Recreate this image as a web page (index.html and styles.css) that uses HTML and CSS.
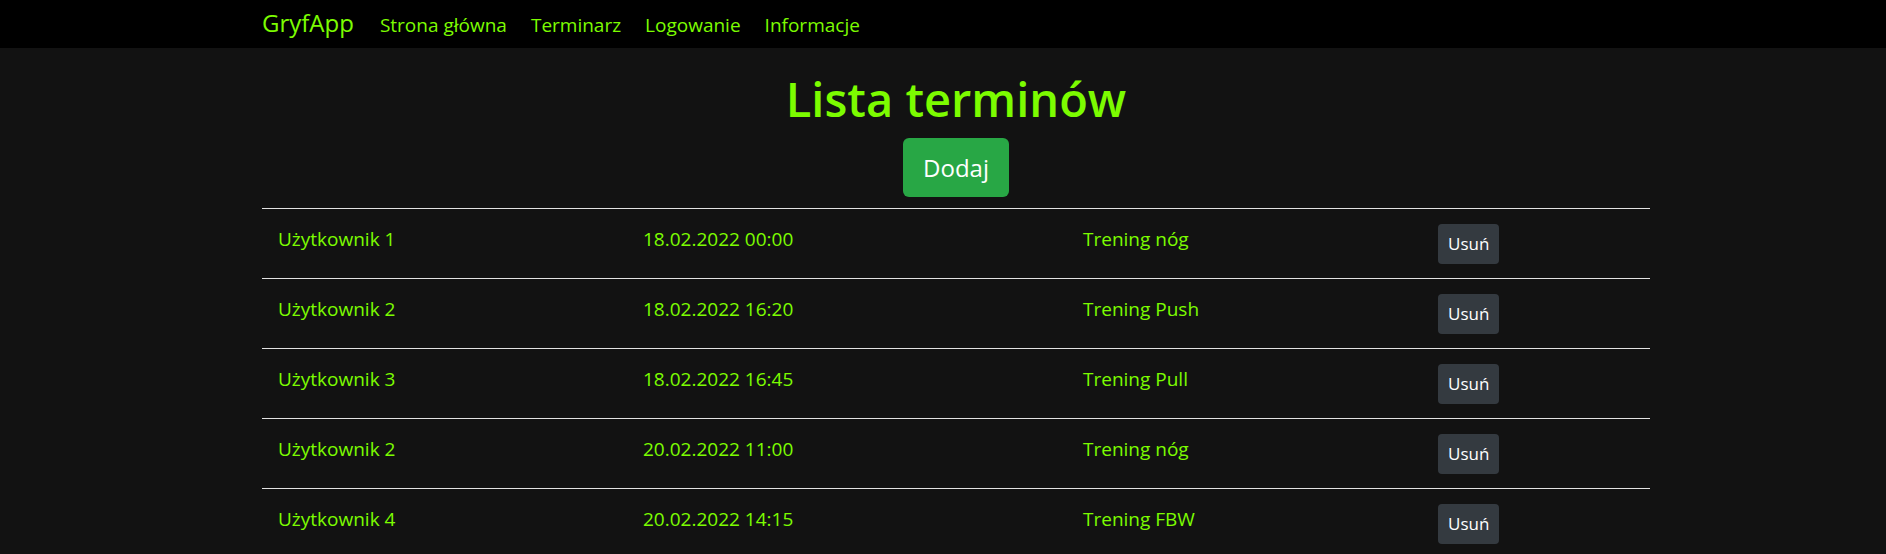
FILE: index.html
```html
<!DOCTYPE html>
<html lang="pl">
<head>
<meta charset="utf-8">
<title>GryfApp - Lista terminów</title>
<link rel="stylesheet" href="styles.css">
</head>
<body>
<nav class="navbar">
  <div class="nav-inner">
    <a class="brand" href="#">GryfApp</a>
    <ul class="nav-links">
      <li><a href="#">Strona główna</a></li>
      <li><a href="#">Terminarz</a></li>
      <li><a href="#">Logowanie</a></li>
      <li><a href="#">Informacje</a></li>
    </ul>
  </div>
</nav>
<main class="container">
  <h1 class="title">Lista terminów</h1>
  <div class="actions"><button class="btn btn-add">Dodaj</button></div>
  <div class="list">
    <div class="row"><span class="cell">Użytkownik 1</span><span class="cell">18.02.2022 00:00</span><span class="cell">Trening nóg</span><span class="cell cell-btn"><button class="btn btn-del">Usuń</button></span></div>
    <div class="row"><span class="cell">Użytkownik 2</span><span class="cell">18.02.2022 16:20</span><span class="cell">Trening Push</span><span class="cell cell-btn"><button class="btn btn-del">Usuń</button></span></div>
    <div class="row"><span class="cell">Użytkownik 3</span><span class="cell">18.02.2022 16:45</span><span class="cell">Trening Pull</span><span class="cell cell-btn"><button class="btn btn-del">Usuń</button></span></div>
    <div class="row"><span class="cell">Użytkownik 2</span><span class="cell">20.02.2022 11:00</span><span class="cell">Trening nóg</span><span class="cell cell-btn"><button class="btn btn-del">Usuń</button></span></div>
    <div class="row"><span class="cell">Użytkownik 4</span><span class="cell">20.02.2022 14:15</span><span class="cell">Trening FBW</span><span class="cell cell-btn"><button class="btn btn-del">Usuń</button></span></div>
  </div>
</main>
</body>
</html>
```
FILE: styles.css
```css
* { box-sizing: border-box; }
html, body { margin: 0; padding: 0; }
body {
  background: #121212;
  color: #7cfc00;
  font-family: "Open Sans", "Noto Sans", sans-serif;
  overflow: hidden;
}
a { text-decoration: none; color: #7cfc00; }

.navbar {
  background: #000;
  height: 48px;
  padding-top: 8px;
}
.nav-inner {
  margin-left: calc(50% - 681px);
  display: flex;
  align-items: baseline;
  gap: 26px;
}
.brand {
  font-size: 24px;
  line-height: 30px;
}
.nav-links {
  list-style: none;
  margin: 0;
  padding: 0;
  display: flex;
  align-items: baseline;
  gap: 24px;
}
.nav-links a {
  font-size: 19px;
  line-height: 27px;
}

.container {
  width: 1388px;
  margin-left: calc(50% - 681px);
}
.title {
  margin: 23px 0 0;
  text-align: center;
  font-size: 47px;
  font-weight: 600;
  line-height: 56px;
  color: #7cfc00;
}
.actions {
  display: flex;
  justify-content: center;
  margin-top: 11px;
  margin-bottom: 11px;
}
.btn {
  border: 0;
  font-family: "Open Sans", "Noto Sans", sans-serif;
  color: #fff;
  cursor: pointer;
}
.btn-add {
  background: #28a745;
  font-size: 24px;
  line-height: 37px;
  padding: 11px 20px;
  border-radius: 6px;
}
.list { display: flex; flex-direction: column; }
.row {
  display: grid;
  grid-template-columns: 365px 440px 355px 1fr;
  border-top: 1px solid #e2e2e2;
  padding: 15px 0 14px;
  align-items: start;
}
.cell {
  padding: 2px 16px 0;
  font-size: 19px;
  line-height: 27px;
}
.cell-btn { padding: 0 16px; line-height: 0; }
.btn-del {
  background: #343a40;
  font-size: 17px;
  line-height: 24px;
  padding: 8px 10px;
  border-radius: 4px;
}
```
